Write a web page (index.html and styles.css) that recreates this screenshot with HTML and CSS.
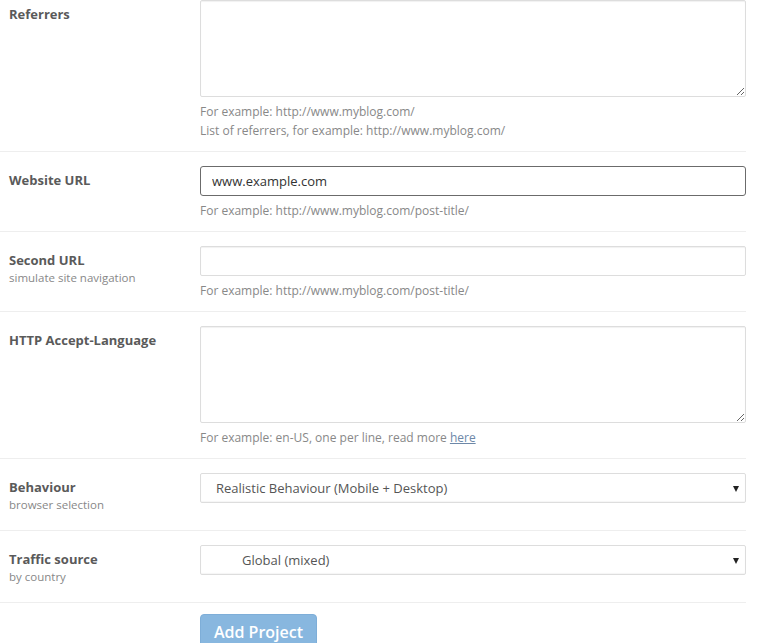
FILE: index.html
```html
<!DOCTYPE html>
<html lang="en">
<head>
    <meta charset="UTF-8">
    <meta name="viewport" content="width=device-width, initial-scale=1.0">
    <title>Add Project</title>
    <link rel="stylesheet" href="styles.css">
</head>
<body>
    <form class="project-form">
        <div class="row">
            <div class="label">
                <div class="label-title">Referrers</div>
            </div>
            <div class="control">
                <textarea class="field area"></textarea>
                <p class="help">For example: http://www.myblog.com/</p>
                <p class="help">List of referrers, for example: http://www.myblog.com/</p>
            </div>
        </div>

        <div class="row">
            <div class="label">
                <div class="label-title">Website URL</div>
            </div>
            <div class="control">
                <input class="field focused" type="text" value="www.example.com" autofocus>
                <p class="help">For example: http://www.myblog.com/post-title/</p>
            </div>
        </div>

        <div class="row">
            <div class="label">
                <div class="label-title">Second URL</div>
                <div class="label-sub">simulate site navigation</div>
            </div>
            <div class="control">
                <input class="field" type="text">
                <p class="help">For example: http://www.myblog.com/post-title/</p>
            </div>
        </div>

        <div class="row">
            <div class="label">
                <div class="label-title">HTTP Accept-Language</div>
            </div>
            <div class="control">
                <textarea class="field area"></textarea>
                <p class="help">For example: en-US, one per line, read more <a href="#">here</a></p>
            </div>
        </div>

        <div class="row">
            <div class="label">
                <div class="label-title">Behaviour</div>
                <div class="label-sub">browser selection</div>
            </div>
            <div class="control">
                <div class="select">Realistic Behaviour (Mobile + Desktop)</div>
            </div>
        </div>

        <div class="row">
            <div class="label">
                <div class="label-title">Traffic source</div>
                <div class="label-sub">by country</div>
            </div>
            <div class="control">
                <div class="select flag">Global (mixed)</div>
            </div>
        </div>

        <div class="row actions">
            <button type="button" class="button" disabled>Add Project</button>
        </div>
    </form>
</body>
</html>
```

FILE: styles.css
```css
* {
    margin: 0;
    padding: 0;
    box-sizing: border-box;
}

body {
    font-family: 'Open Sans', 'Noto Sans', sans-serif;
    background: #fff;
    color: #555;
    overflow: hidden;
}

.project-form {
    width: 746px;
}

.row {
    display: grid;
    grid-template-columns: 191px 546px;
    padding: 14px 0 11px 9px;
    border-top: 1px solid #eeeeee;
}

.row:first-child {
    border-top: none;
    padding-top: 0;
}

.label-title {
    font-size: 13px;
    font-weight: 700;
    line-height: 18px;
    margin-top: 5px;
    color: #5a5a5a;
}

.label-sub {
    font-size: 11.5px;
    line-height: 17px;
    color: #888;
    margin-bottom: 6px;
}

.field {
    display: block;
    width: 100%;
    height: 30px;
    border: 1px solid #dddddd;
    border-radius: 2px;
    box-shadow: inset 0 1px 1px rgba(0,0,0,0.06);
    font-family: inherit;
    font-size: 13px;
    color: #333;
    padding: 0 11px;
    outline: none;
}

.field.area {
    height: 97px;
    resize: vertical;
    padding: 6px 11px;
}

.field.focused {
    border-color: #6b6b6b;
    border-radius: 3px;
    box-shadow: none;
    caret-color: #222;
}

.help {
    font-size: 12px;
    line-height: 19px;
    color: #888;
    margin-top: 5px;
}

.help + .help {
    margin-top: 0;
}

.help a {
    color: #6d88a8;
    text-decoration: underline;
}

.select {
    position: relative;
    height: 30px;
    border: 1px solid #dddddd;
    border-radius: 2px;
    box-shadow: inset 0 -1px 1px rgba(0,0,0,0.04);
    font-size: 13px;
    line-height: 28px;
    color: #555;
    padding-left: 15px;
}

.select.flag {
    padding-left: 41px;
}

.select::after {
    content: '';
    position: absolute;
    right: 6px;
    top: 12px;
    border-left: 3.5px solid transparent;
    border-right: 3.5px solid transparent;
    border-top: 6px solid #222;
}

.actions {
    display: block;
    padding: 11px 0 0 200px;
}

.button {
    width: 117px;
    height: 36px;
    background: #88b7df;
    color: #fff;
    border: 1px solid #7eaed8;
    border-radius: 4px;
    font-family: inherit;
    font-size: 16px;
    font-weight: 600;
    cursor: not-allowed;
}
```
